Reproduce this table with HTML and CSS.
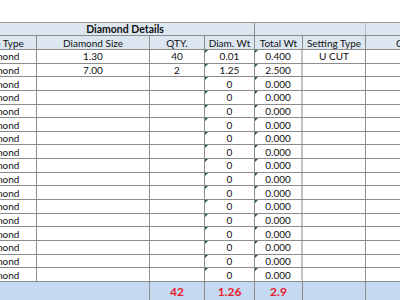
FILE: index.html
```html
<!DOCTYPE html>
<html>
<head>
<meta charset="utf-8">
<link rel="stylesheet" href="styles.css">
</head>
<body>
<div class="sheet">
  <div class="table">
    <div class="row head1">
      <div class="c span-a">Diamond Details</div>
      <div class="c span-b"></div>
      <div class="c span-c"></div>
    </div>
    <div class="row head2">
      <div class="c">Stone Type</div>
      <div class="c">Diamond Size</div>
      <div class="c">QTY.</div>
      <div class="c">Diam. Wt</div>
      <div class="c">Total Wt</div>
      <div class="c">Setting Type</div>
      <div class="c">Certificate No.</div>
    </div>
    <div class="row data">
      <div class="c">Diamond</div><div class="c">1.30</div><div class="c">40</div>
      <div class="c mark">0.01</div><div class="c mark sep">0.400</div><div class="c">U CUT</div><div class="c"></div>
    </div>
    <div class="row data">
      <div class="c">Diamond</div><div class="c">7.00</div><div class="c">2</div>
      <div class="c mark">1.25</div><div class="c mark sep">2.500</div><div class="c"></div><div class="c"></div>
    </div>
    <div class="row data"><div class="c">Diamond</div><div class="c"></div><div class="c"></div><div class="c mark">0</div><div class="c mark sep">0.000</div><div class="c"></div><div class="c"></div></div>
    <div class="row data"><div class="c">Diamond</div><div class="c"></div><div class="c"></div><div class="c mark">0</div><div class="c mark sep">0.000</div><div class="c"></div><div class="c"></div></div>
    <div class="row data"><div class="c">Diamond</div><div class="c"></div><div class="c"></div><div class="c mark">0</div><div class="c mark sep">0.000</div><div class="c"></div><div class="c"></div></div>
    <div class="row data"><div class="c">Diamond</div><div class="c"></div><div class="c"></div><div class="c mark">0</div><div class="c mark sep">0.000</div><div class="c"></div><div class="c"></div></div>
    <div class="row data"><div class="c">Diamond</div><div class="c"></div><div class="c"></div><div class="c mark">0</div><div class="c mark sep">0.000</div><div class="c"></div><div class="c"></div></div>
    <div class="row data"><div class="c">Diamond</div><div class="c"></div><div class="c"></div><div class="c mark">0</div><div class="c mark sep">0.000</div><div class="c"></div><div class="c"></div></div>
    <div class="row data"><div class="c">Diamond</div><div class="c"></div><div class="c"></div><div class="c mark">0</div><div class="c mark sep">0.000</div><div class="c"></div><div class="c"></div></div>
    <div class="row data"><div class="c">Diamond</div><div class="c"></div><div class="c"></div><div class="c mark">0</div><div class="c mark sep">0.000</div><div class="c"></div><div class="c"></div></div>
    <div class="row data"><div class="c">Diamond</div><div class="c"></div><div class="c"></div><div class="c mark">0</div><div class="c mark sep">0.000</div><div class="c"></div><div class="c"></div></div>
    <div class="row data"><div class="c">Diamond</div><div class="c"></div><div class="c"></div><div class="c mark">0</div><div class="c mark sep">0.000</div><div class="c"></div><div class="c"></div></div>
    <div class="row data"><div class="c">Diamond</div><div class="c"></div><div class="c"></div><div class="c mark">0</div><div class="c mark sep">0.000</div><div class="c"></div><div class="c"></div></div>
    <div class="row data"><div class="c">Diamond</div><div class="c"></div><div class="c"></div><div class="c mark">0</div><div class="c mark sep">0.000</div><div class="c"></div><div class="c"></div></div>
    <div class="row data"><div class="c">Diamond</div><div class="c"></div><div class="c"></div><div class="c mark">0</div><div class="c mark sep">0.000</div><div class="c"></div><div class="c"></div></div>
    <div class="row data"><div class="c">Diamond</div><div class="c"></div><div class="c"></div><div class="c mark">0</div><div class="c mark sep">0.000</div><div class="c"></div><div class="c"></div></div>
    <div class="row data"><div class="c">Diamond</div><div class="c"></div><div class="c"></div><div class="c mark">0</div><div class="c mark sep">0.000</div><div class="c"></div><div class="c"></div></div>
    <div class="row total">
      <div class="c span-total"></div>
      <div class="c red">42</div>
      <div class="c red">1.26</div>
      <div class="c red">2.9</div>
      <div class="c"></div>
      <div class="c"></div>
    </div>
  </div>
</div>
</body>
</html>
```

FILE: styles.css
```css
html, body {
  margin: 0;
  padding: 0;
  background: #ffffff;
}
.sheet {
  width: 400px;
  height: 300px;
  overflow: hidden;
  padding-top: 22px;
  box-sizing: border-box;
}
.table {
  margin-left: -37px;
  width: 528px;
  display: flex;
  flex-direction: column;
  font-family: Lato, "Liberation Sans", sans-serif;
  font-size: 10px;
  color: #111111;
}
.row {
  display: grid;
  grid-template-columns: 74px 113px 55px 50px 48px 63px 125px;
  box-sizing: border-box;
  border-bottom: 1px solid #8c8c8c;
}
.c {
  display: flex;
  align-items: center;
  justify-content: center;
  border-right: 1px solid #8c8c8c;
  white-space: nowrap;
  overflow: hidden;
  position: relative;
}
.head1 {
  height: 14px;
  border-top: 1px solid #9a9a9a;
  background: #dce6f1;
  font-weight: bold;
  font-size: 10.5px;
  grid-template-columns: 292px 111px 125px;
}
.head1 .c {
  border-right-color: #b4bcc6;
}
.head1 .span-a {
  border-right-color: #8c8c8c;
  padding-left: 33px;
}
.head2 {
  height: 14px;
  background: #dce6f1;
}
.data {
  height: 13.65px;
}
.data .sep {
  border-right: 2px solid #c4c4c4;
}
.mark::before {
  content: "";
  position: absolute;
  left: 0;
  top: 0;
  width: 0;
  height: 0;
  border-top: 3px solid #1d5e34;
  border-right: 3px solid transparent;
}
.total {
  height: 20px;
  background: #c5d9f1;
  border-bottom: none;
  grid-template-columns: 187px 55px 50px 48px 63px 125px;
}
.red {
  color: #e8202a;
  font-weight: bold;
  font-size: 12px;
}
```
